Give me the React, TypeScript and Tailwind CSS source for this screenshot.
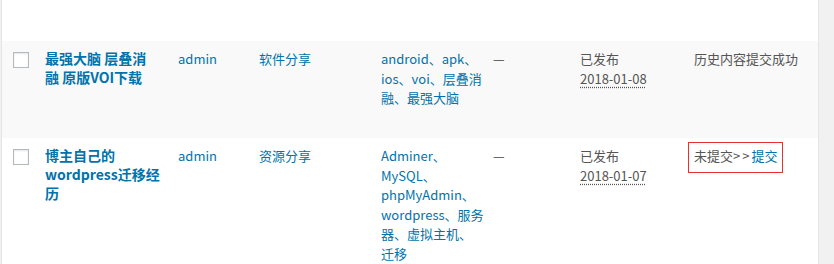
import React from "react";

const font = { fontFamily: '"Noto Sans CJK SC", "Noto Sans", sans-serif' };

function Checkbox() {
  return (
    <div className="ml-[11px] mt-[11px] h-4 w-4 border border-[#b4b9be] bg-white shadow-[inset_0_1px_2px_rgba(0,0,0,0.1)]" />
  );
}

const link = "text-[#0073aa]";

function Row({
  bg,
  h,
  title,
  cat,
  tags,
  date,
  status,
}: {
  bg: string;
  h: string;
  title: React.ReactNode;
  cat: string;
  tags: React.ReactNode;
  date: string;
  status: React.ReactNode;
}) {
  return (
    <div
      className={`grid grid-cols-[43px_133px_81px_122px_112px_87px_114px_124px] text-[13px] leading-[19.5px] text-[#555] ${bg} ${h}`}
    >
      <div>
        <Checkbox />
      </div>
      <div className={`pt-2 text-[14px] font-bold leading-[19.2px] ${link}`}>{title}</div>
      <div className={`pt-2 ${link}`}>admin</div>
      <div className={`pt-2 ${link}`}>{cat}</div>
      <div className={`pt-2 ${link}`}>{tags}</div>
      <div className="pt-2 text-[#444]">—</div>
      <div className="pt-2">
        已发布
        <br />
        <span className="underline decoration-dotted decoration-[#555] underline-offset-[3px]">{date}</span>
      </div>
      <div className="pt-2">{status}</div>
    </div>
  );
}

export default function App() {
  return (
    <div className="flex h-[264px] w-[834px] overflow-hidden bg-[#f1f1f1]" style={font}>
      <div className="w-[1px] bg-[#f1f1f1]" />
      <div className="w-[1px] bg-[#e5e5e5]" />
      <div className="flex w-[816px] flex-col bg-white">
        <div className="h-[41px] shrink-0 bg-white" />
        <Row
          bg="bg-[#f9f9f9]"
          h="h-[97px] shrink-0"
          title={
            <>
              最强大脑 层叠消
              <br />
              融 原版VOI下载
            </>
          }
          cat="软件分享"
          tags={
            <>
              android、apk、
              <br />
              ios、voi、层叠消
              <br />
              融、最强大脑
            </>
          }
          date="2018-01-08"
          status="历史内容提交成功"
        />
        <Row
          bg="bg-white"
          h="flex-1"
          title={
            <>
              博主自己的
              <br />
              wordpress迁移经
              <br />
              历
            </>
          }
          cat="资源分享"
          tags={
            <>
              Adminer、
              <br />
              MySQL、
              <br />
              phpMyAdmin、
              <br />
              wordpress、服务
              <br />
              器、虚拟主机、
              <br />
              迁移
            </>
          }
          date="2018-01-07"
          status={
            <span className="-ml-[6px] -mt-[4px] inline-block border border-[#e8302f] px-[5px] pt-[3px] pb-[6px]">
              未提交<span className="tracking-[2px]">&gt;&gt;</span>
              <span className={link}>提交</span>
            </span>
          }
        />
      </div>
      <div className="w-[1px] bg-[#e5e5e5]" />
      <div className="flex-1 bg-[#f1f1f1]" />
    </div>
  );
}
